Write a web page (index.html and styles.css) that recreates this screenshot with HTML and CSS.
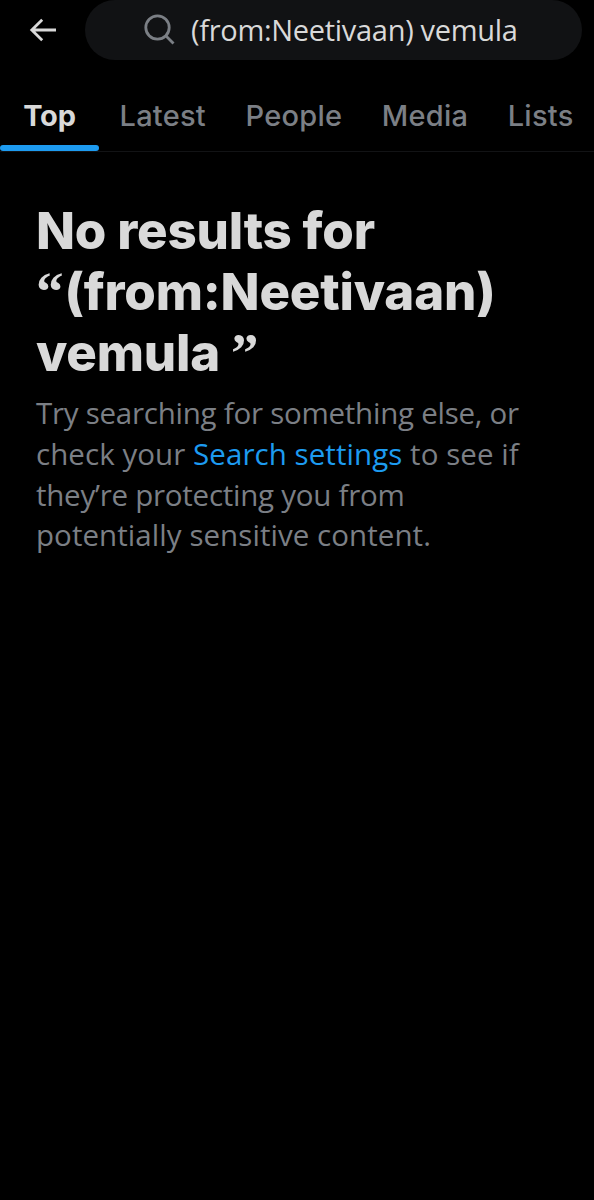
FILE: index.html
```html
<!DOCTYPE html>
<html lang="en">
<head>
  <meta charset="UTF-8">
  <meta name="viewport" content="width=device-width, initial-scale=1.0">
  <title>Search</title>
  <link rel="stylesheet" href="styles.css">
</head>

<body>
  <header>
    <a href="#" class="back" aria-label="Back">
      <svg width="28" height="24" viewBox="0 0 28 24">
        <path d="M13.2 1.8 L2.8 12 L13.2 22.2 M2.8 12 H27" />
      </svg>
    </a>
    <div class="search">
      <svg width="32" height="32" viewBox="0 0 32 32">
        <circle cx="13.5" cy="13.5" r="11.7" />
        <path d="M21.8 21.8 L29.5 29.5" />
      </svg>
      <span class="query">(from:Neetivaan) vemula</span>
    </div>
  </header>

  <nav>
    <a href="#" class="tab active">Top</a>
    <a href="#" class="tab">Latest</a>
    <a href="#" class="tab">People</a>
    <a href="#" class="tab">Media</a>
    <a href="#" class="tab">Lists</a>
  </nav>

  <main>
    <h1>
      No results for<br>
      <span class="quote">“</span>(from:Neetivaan)<br>
      vemula <span class="quote">”</span>
    </h1>
    <p>
      <span class="line">Try searching for something else, or</span>
      <span class="line wide">check your <a href="#">Search settings</a> to see if</span>
      <span class="line">they’re protecting you from</span>
      <span class="line wide">potentially sensitive content.</span>
    </p>
  </main>
</body>
</html>
```

FILE: styles.css
```css
body {
  margin: 0;
  min-height: 1200px;
  background-color: #000;
  color: #d9d9d9;
  font-family: "Open Sans", "Noto Sans", sans-serif;
  overflow-x: hidden;
}

a {
  text-decoration: none;
}

svg {
  display: block;
  fill: none;
  flex: none;
}

/* Search bar */
header {
  display: flex;
  height: 61px;
}

.back {
  width: 57px;
  padding: 18px 0 0 29px;
  box-sizing: border-box;
  margin-right: 28px;
}

.back svg {
  stroke: #d9d9d9;
  stroke-width: 2.8;
}

.search {
  display: flex;
  align-items: center;
  width: 497px;
  height: 60px;
  box-sizing: border-box;
  padding-left: 59px;
  border-radius: 30px;
  background-color: #111214;
}

.search svg {
  stroke: #7b7f85;
  stroke-width: 2.8;
}

.query {
  margin-left: 15px;
  font-size: 29px;
  letter-spacing: -0.3px;
  line-height: 58px;
  white-space: nowrap;
}

/* Tabs */
nav {
  display: flex;
  height: 90px;
  border-bottom: 1px solid #121315;
}

.tab {
  margin-left: 39.5px;
  color: #7b7f85;
  font-family: Inter, sans-serif;
  font-size: 29px;
  font-weight: 500;
  letter-spacing: 0.25px;
  line-height: 109px;
  white-space: nowrap;
}

.active {
  position: relative;
  width: 99px;
  height: 90px;
  margin: 0 -19px 0 0;
  color: #d9d9d9;
  font-weight: 700;
  letter-spacing: -0.2px;
  text-align: center;
}

.active::after {
  content: "";
  position: absolute;
  left: 0;
  bottom: 0;
  width: 100%;
  height: 6px;
  border-radius: 3px;
  background-color: #1d9bf0;
}

/* Empty state */
main {
  padding: 48px 36px;
}

h1 {
  margin: 0;
  font-family: Inter, sans-serif;
  font-size: 51px;
  font-weight: 800;
  letter-spacing: -0.2px;
  line-height: 61px;
  white-space: nowrap;
}

/* Inter has straight slanted quotes */
.quote {
  font-family: "Liberation Serif", serif;
  font-size: 55px;
  letter-spacing: 1px;
  line-height: 0;
}

p {
  margin: 10px 0 0;
  color: #7b7f85;
  font-size: 29.5px;
  line-height: 40.8px;
  white-space: nowrap;
}

.line {
  display: block;
  letter-spacing: -0.25px;
}

.wide {
  letter-spacing: 0.06px;
}

p a {
  color: #1d9bf0;
}
```
